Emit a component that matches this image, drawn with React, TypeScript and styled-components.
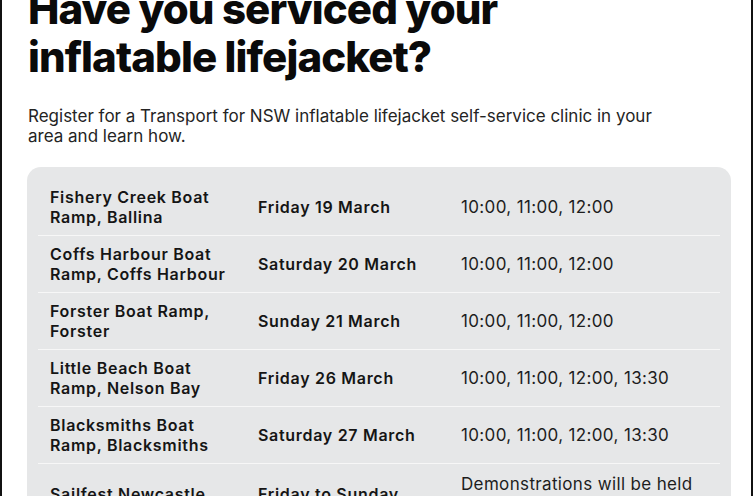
import styled, { createGlobalStyle } from 'styled-components';

const GlobalStyle = createGlobalStyle`
  html, body { margin: 0; padding: 0; background: #ffffff; }
  body { font-family: Inter, 'Liberation Sans', sans-serif; color: #111; overflow: hidden; }
`;

const Frame = styled.div`
  width: 753px;
  height: 496px;
  border-left: 2px solid #111;
  border-right: 2px solid #111;
  box-sizing: border-box;
  overflow: hidden;
  padding: 0 20px 0 26px;
`;

const Heading = styled.h1`
  margin: -15px 0 0;
  font-size: 42px;
  line-height: 48px;
  font-weight: 800;
  color: #0a0a0a;
  letter-spacing: -0.9px;
`;

const Intro = styled.p`
  margin: 25px 0 0;
  font-size: 17px;
  line-height: 20px;
  color: #242424;
  max-width: 660px;
`;

const Schedule = styled.div`
  margin: 21px 0 0 -1px;
  width: 704px;
  background: #e6e7e8;
  border-radius: 14px;
  padding: 12px 11px 0;
  box-sizing: border-box;
`;

const Row = styled.div<{ $last?: boolean }>`
  display: grid;
  grid-template-columns: 208px 203px 1fr;
  align-items: center;
  min-height: 57px;
  padding: ${({ $last }) => ($last ? '10px 12px' : '0 12px')};
  border-bottom: ${({ $last }) => ($last ? 'none' : '1.5px solid #f7f7f7')};
  box-sizing: border-box;
`;

const Place = styled.div`
  font-size: 16px;
  line-height: 20px;
  font-weight: 600;
  letter-spacing: 0.7px;
  color: #151515;
`;

const Day = styled(Place)``;

const Times = styled.div`
  font-size: 17px;
  line-height: 20px;
  letter-spacing: 0.35px;
  color: #1d1d1d;
`;

const sessions = [
  { place: ['Fishery Creek Boat', 'Ramp, Ballina'], day: 'Friday 19 March', times: '10:00, 11:00, 12:00' },
  { place: ['Coffs Harbour Boat', 'Ramp, Coffs Harbour'], day: 'Saturday 20 March', times: '10:00, 11:00, 12:00' },
  { place: ['Forster Boat Ramp,', 'Forster'], day: 'Sunday 21 March', times: '10:00, 11:00, 12:00' },
  { place: ['Little Beach Boat', 'Ramp, Nelson Bay'], day: 'Friday 26 March', times: '10:00, 11:00, 12:00, 13:30' },
  { place: ['Blacksmiths Boat', 'Ramp, Blacksmiths'], day: 'Saturday 27 March', times: '10:00, 11:00, 12:00, 13:30' },
];

export default function App() {
  return (
    <>
      <GlobalStyle />
      <Frame>
        <Heading>
          Have you serviced your
          <br />
          inflatable lifejacket?
        </Heading>
        <Intro>
          Register for a Transport for NSW inflatable lifejacket self-service clinic in your area and learn how.
        </Intro>
        <Schedule>
          {sessions.map((s) => (
            <Row key={s.day}>
              <Place>
                {s.place[0]}
                <br />
                {s.place[1]}
              </Place>
              <Day>{s.day}</Day>
              <Times>{s.times}</Times>
            </Row>
          ))}
          <Row $last>
            <Place>
              Sailfest Newcastle
              <br />
              Marina, Newcastle
            </Place>
            <Day>
              Friday to Sunday
              <br />
              2–4 April
            </Day>
            <Times>
              Demonstrations will be held
              <br />
              on all three days of the
              <br />
              festival
            </Times>
          </Row>
        </Schedule>
      </Frame>
    </>
  );
}
